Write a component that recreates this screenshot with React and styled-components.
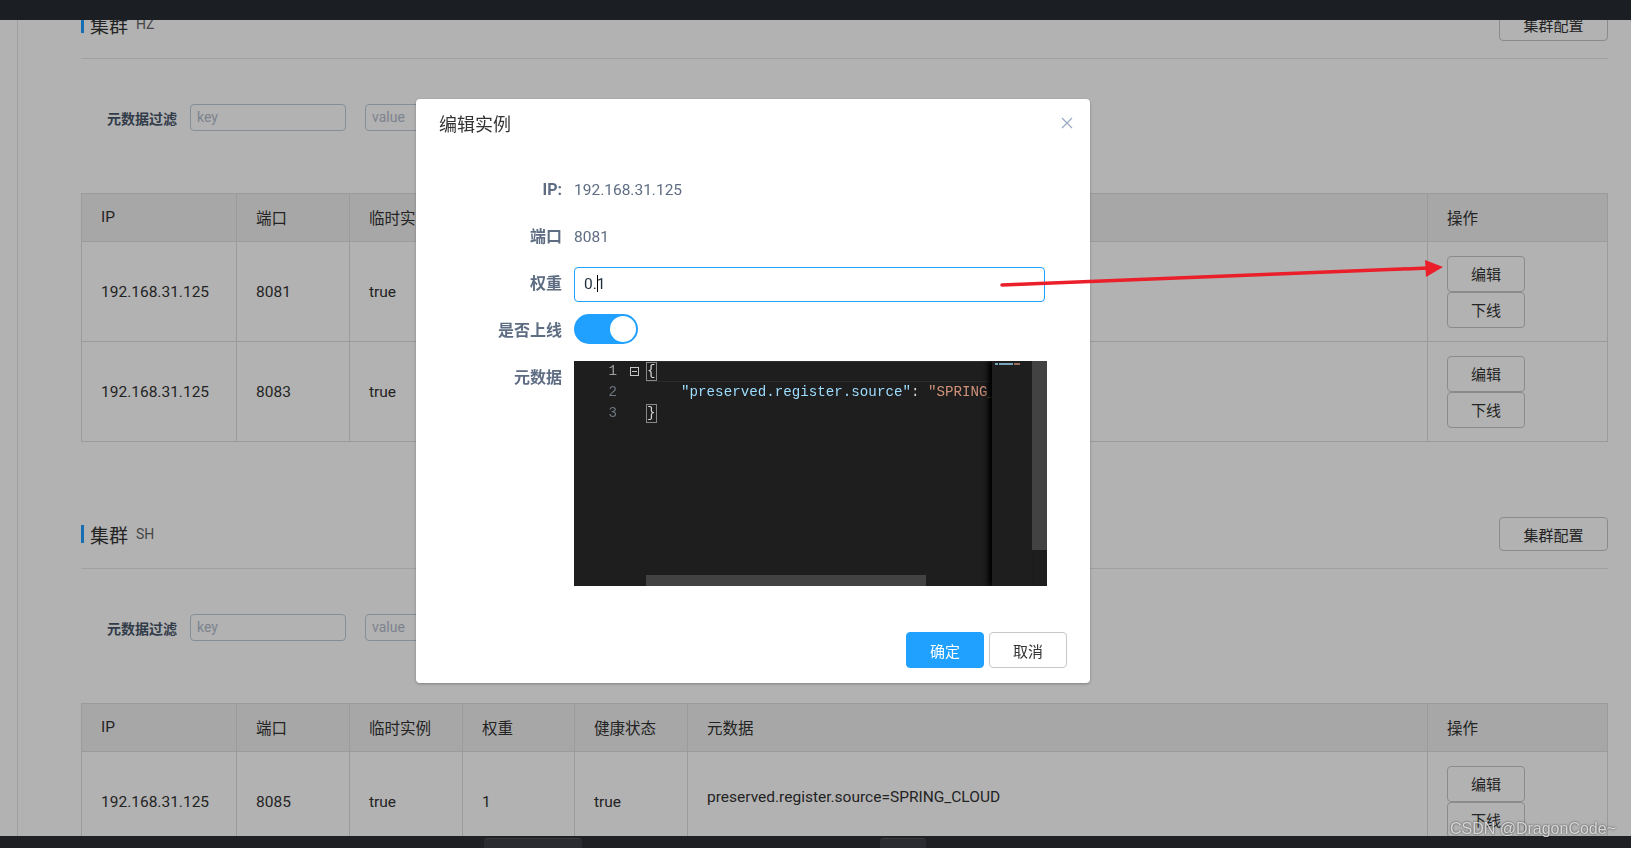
import styled, { createGlobalStyle } from 'styled-components';

const GlobalStyle = createGlobalStyle`
  html, body {
    margin: 0;
    padding: 0;
  }
  body {
    width: 1631px;
    height: 848px;
    overflow: hidden;
    background: #fff;
    font-family: Roboto, "Noto Sans CJK SC", sans-serif;
    color: #333;
  }
  * {
    box-sizing: border-box;
  }
`;

const Page = styled.div`
  width: 1631px;
  height: 848px;
  display: flex;
  flex-direction: column;
`;

const TopBar = styled.div`
  position: relative;
  z-index: 20;
  height: 20px;
  flex-shrink: 0;
  background: #1b1e23;
`;

const Main = styled.div`
  flex: 1;
  display: flex;
  overflow: hidden;
`;

const Sidebar = styled.div`
  width: 18px;
  flex-shrink: 0;
  border-right: 1px solid #e4e4e4;
`;

const Content = styled.div`
  flex: 1;
  margin-top: -13px;
  padding: 0 24px 0 63px;
`;

const Section = styled.section`
  margin-bottom: 75px;
`;

const SectionHead = styled.div`
  display: flex;
  align-items: center;
  justify-content: space-between;
  padding-bottom: 17px;
  border-bottom: 1px solid #e6e6e6;
`;

const Title = styled.h3`
  margin: 0;
  display: flex;
  align-items: center;
  border-left: 3px solid #20a0ff;
  padding-left: 6px;
  height: 18px;
  font-size: 19px;
  font-weight: normal;
  color: #333;
`;

const TitleTag = styled.span`
  margin-left: 8px;
  font-size: 14px;
  color: #666;
`;

const PlainButton = styled.button`
  width: ${(p) => p.$w || 78}px;
  height: ${(p) => p.$h || 36}px;
  padding: 0;
  border: 1px solid #c8c8c8;
  border-radius: 4px;
  background: #fff;
  font-family: inherit;
  font-size: 15px;
  color: #333;
  display: block;
`;

const FilterRow = styled.div`
  display: flex;
  align-items: center;
  height: 27px;
  margin-top: 45px;
  padding-left: 26px;
  gap: 19px;
`;

const FilterLabel = styled.label`
  font-size: 14px;
  font-weight: bold;
  color: #48576a;
  margin-right: -6px;
`;

const FilterInput = styled.div`
  width: 156px;
  height: 27px;
  border: 1px solid #bfcbd9;
  border-radius: 4px;
  padding-left: 6px;
  font-size: 14px;
  line-height: 25px;
  color: #b4bccc;
`;

const Table = styled.table`
  margin-top: 62px;
  width: 100%;
  border-collapse: collapse;
  table-layout: fixed;
  font-size: 15.5px;
`;

const Th = styled.th`
  height: 48px;
  padding: 0 19px 2px;
  text-align: left;
  font-weight: normal;
  color: #333;
  background: #f0f0f0;
  border: 1px solid #dfdfdf;
`;

const Td = styled.td`
  height: 100px;
  padding: 0 19px ${(p) => (p.$raise ? 9 : 0)}px;
  color: #333;
  border: 1px solid #dfdfdf;
  white-space: nowrap;
`;

const Overlay = styled.div`
  position: fixed;
  inset: 0;
  z-index: 10;
  background: rgba(0, 0, 0, 0.3);
`;

const BottomBar = styled.div`
  position: relative;
  z-index: 20;
  height: 12px;
  flex-shrink: 0;
  background: #1f2024;
  display: flex;
  align-items: flex-end;
  padding-left: 484px;
  gap: 298px;
`;

const BarTab = styled.div`
  width: ${(p) => p.$w}px;
  height: 10px;
  border-radius: 4px 4px 0 0;
  background: #2a2b30;
  border-top: 1px solid #3c3d42;
`;

const Dialog = styled.div`
  position: fixed;
  left: 416px;
  top: 99px;
  z-index: 30;
  width: 674px;
  background: #fff;
  border-radius: 4px;
  box-shadow: 0 1px 3px rgba(0, 0, 0, 0.3);
`;

const DialogHead = styled.div`
  height: 48px;
  display: flex;
  align-items: center;
  justify-content: space-between;
  padding: 0 17px 0 23px;
`;

const DialogTitle = styled.span`
  font-size: 18px;
  color: #333;
`;

const DialogBody = styled.div`
  padding: 26px 45px 30px 23px;
`;

const FormItem = styled.div`
  display: flex;
  align-items: flex-start;
  min-height: 36px;
  margin-bottom: ${(p) => (p.$last ? 0 : 11)}px;
`;

const FormLabel = styled.div`
  width: 135px;
  flex-shrink: 0;
  padding-right: 12px;
  text-align: right;
  line-height: 34px;
  font-size: 16px;
  font-weight: bold;
  color: #5e6d82;
`;

const FormValue = styled.div`
  flex: 1;
  line-height: 34px;
  font-size: 15.5px;
  color: #5e6d82;
`;

const TextInput = styled.div`
  height: 35px;
  border: 1px solid #20a0ff;
  border-radius: 4px;
  padding-left: 9px;
  line-height: 33px;
  font-size: 15.5px;
  color: #1f2d3d;
`;

const Caret = styled.span`
  display: inline-block;
  width: 1px;
  height: 17px;
  margin: 0 -1px 0 0;
  vertical-align: -3px;
  background: #000;
`;

const Switch = styled.div`
  width: 64px;
  height: 30px;
  border-radius: 15px;
  background: #20a0ff;
  display: flex;
  align-items: center;
  justify-content: flex-end;
  padding-right: 2px;
`;

const Knob = styled.div`
  width: 26px;
  height: 26px;
  border-radius: 50%;
  background: #fff;
`;

const Editor = styled.div`
  position: relative;
  height: 225px;
  background: #1e1e1e;
  display: flex;
  overflow: hidden;
  font-family: "Liberation Mono", "DejaVu Sans Mono", monospace;
  font-size: 14.2px;
  line-height: 21px;
`;

const Gutter = styled.div`
  width: 72px;
  flex-shrink: 0;
`;

const GutterLine = styled.div`
  display: flex;
  height: 21px;
`;

const LineNo = styled.span`
  width: 43px;
  text-align: right;
  color: ${(p) => (p.$active ? '#a0a0a0' : '#6e7681')};
`;

const Fold = styled.span`
  flex: 1;
  display: flex;
  align-items: center;
  padding-left: 13px;
`;

const FoldBox = styled.span`
  width: 9px;
  height: 9px;
  border: 1px solid #c5c5c5;
  display: flex;
  align-items: center;
  justify-content: center;
  &::after {
    content: '';
    width: 5px;
    height: 1px;
    background: #c5c5c5;
  }
`;

const Code = styled.div`
  flex: 1;
  white-space: pre;
  color: #d4d4d4;
`;

const CodeLine = styled.div`
  height: 21px;
  padding-left: 1px;
  border-top: ${(p) => (p.$active ? '1px solid #2c2c2c' : 'none')};
  border-bottom: ${(p) => (p.$active ? '1px solid #2c2c2c' : 'none')};
  line-height: ${(p) => (p.$active ? 19 : 21)}px;
`;

const Bracket = styled.span`
  display: inline-block;
  line-height: 17px;
  border: 1px solid #888;
  margin: 0 -1px;
`;

const Key = styled.span`
  color: #9cdcfe;
`;

const Str = styled.span`
  color: #ce9178;
`;

const Minimap = styled.div`
  position: absolute;
  top: 0;
  right: 15px;
  width: 40px;
  height: 100%;
  background: #1e1e1e;
  box-shadow: -4px 0 5px #000;
  padding: 2px 0 0 3px;
  display: flex;
  gap: 1px;
  align-items: flex-start;
`;

const MiniMark = styled.span`
  width: ${(p) => p.$w}px;
  height: 2px;
  background: ${(p) => p.$c};
  opacity: 0.7;
`;

const VScroll = styled.div`
  position: absolute;
  top: 0;
  right: 0;
  width: 15px;
  height: 189px;
  background: #424242;
`;

const HScroll = styled.div`
  position: absolute;
  left: 72px;
  bottom: 0;
  width: 280px;
  height: 11px;
  background: #424242;
`;

const DialogFoot = styled.div`
  display: flex;
  justify-content: flex-end;
  gap: 5px;
  padding: 16px 23px 15px;
`;

const PrimaryButton = styled.button`
  width: 78px;
  height: 36px;
  padding: 0;
  border: 1px solid #20a0ff;
  border-radius: 4px;
  background: #20a0ff;
  font-family: inherit;
  font-size: 15px;
  color: #fff;
`;

const ArrowLayer = styled.svg`
  position: fixed;
  inset: 0;
  z-index: 40;
  pointer-events: none;
`;

const Watermark = styled.div`
  position: fixed;
  right: 15px;
  bottom: 10px;
  z-index: 50;
  font-family: "Liberation Sans", Arial, sans-serif;
  font-size: 16px;
  color: rgba(255, 255, 255, 0.75);
  text-shadow: 0 0 2px rgba(0, 0, 0, 0.8);
`;

const columns = ['IP', '端口', '临时实例', '权重', '健康状态', '元数据', '操作'];
const widths = [155, 113, 113, 112, 113, 740, 180];

const clusters = [
  { name: 'HZ', ports: ['8081', '8083'] },
  { name: 'SH', ports: ['8085'] },
];

function Cluster({ name, ports }) {
  return (
    <Section>
      <SectionHead>
        <Title>
          集群<TitleTag>{name}</TitleTag>
        </Title>
        <PlainButton $w={109} $h={34}>集群配置</PlainButton>
      </SectionHead>
      <FilterRow>
        <FilterLabel>元数据过滤</FilterLabel>
        <FilterInput>key</FilterInput>
        <FilterInput>value</FilterInput>
      </FilterRow>
      <Table>
        <colgroup>
          {widths.map((w, i) => (
            <col key={i} style={{ width: w }} />
          ))}
        </colgroup>
        <thead>
          <tr>
            {columns.map((c) => (
              <Th key={c}>{c}</Th>
            ))}
          </tr>
        </thead>
        <tbody>
          {ports.map((port) => (
            <tr key={port}>
              <Td>192.168.31.125</Td>
              <Td>{port}</Td>
              <Td>true</Td>
              <Td>1</Td>
              <Td>true</Td>
              <Td $raise>preserved.register.source=SPRING_CLOUD</Td>
              <Td>
                <PlainButton>编辑</PlainButton>
                <PlainButton>下线</PlainButton>
              </Td>
            </tr>
          ))}
        </tbody>
      </Table>
    </Section>
  );
}

export default function App() {
  return (
    <>
      <GlobalStyle />
      <Page>
        <TopBar />
        <Main>
          <Sidebar />
          <Content>
            {clusters.map((c) => (
              <Cluster key={c.name} {...c} />
            ))}
          </Content>
        </Main>
        <BottomBar>
          <BarTab $w={98} />
          <BarTab $w={46} />
        </BottomBar>
      </Page>

      <Overlay />

      <Dialog>
        <DialogHead>
          <DialogTitle>编辑实例</DialogTitle>
          <svg width="12" height="12" viewBox="0 0 12 12">
            <path d="M1 1L11 11M11 1L1 11" stroke="#99a9bf" strokeWidth="1.2" />
          </svg>
        </DialogHead>
        <DialogBody>
          <FormItem>
            <FormLabel>IP:</FormLabel>
            <FormValue>192.168.31.125</FormValue>
          </FormItem>
          <FormItem>
            <FormLabel>端口</FormLabel>
            <FormValue>8081</FormValue>
          </FormItem>
          <FormItem>
            <FormLabel>权重</FormLabel>
            <FormValue>
              <TextInput>
                0.<Caret />1
              </TextInput>
            </FormValue>
          </FormItem>
          <FormItem>
            <FormLabel>是否上线</FormLabel>
            <FormValue>
              <Switch>
                <Knob />
              </Switch>
            </FormValue>
          </FormItem>
          <FormItem $last>
            <FormLabel>元数据</FormLabel>
            <FormValue>
              <Editor>
                <Gutter>
                  <GutterLine>
                    <LineNo $active>1</LineNo>
                    <Fold>
                      <FoldBox />
                    </Fold>
                  </GutterLine>
                  <GutterLine>
                    <LineNo>2</LineNo>
                  </GutterLine>
                  <GutterLine>
                    <LineNo>3</LineNo>
                  </GutterLine>
                </Gutter>
                <Code>
                  <CodeLine $active>
                    <Bracket>{'{'}</Bracket>
                  </CodeLine>
                  <CodeLine>
                    {'    '}
                    <Key>"preserved.register.source"</Key>: <Str>"SPRING_CLOUD"</Str>
                  </CodeLine>
                  <CodeLine>
                    <Bracket>{'}'}</Bracket>
                  </CodeLine>
                </Code>
                <Minimap>
                  <MiniMark $w={3} $c="#9cdcfe" />
                  <MiniMark $w={14} $c="#9cdcfe" />
                  <MiniMark $w={6} $c="#ce9178" />
                </Minimap>
                <VScroll />
                <HScroll />
              </Editor>
            </FormValue>
          </FormItem>
        </DialogBody>
        <DialogFoot>
          <PrimaryButton>确定</PrimaryButton>
          <PlainButton>取消</PlainButton>
        </DialogFoot>
      </Dialog>

      <ArrowLayer width="1631" height="848" viewBox="0 0 1631 848">
        <line x1="1002" y1="285" x2="1428" y2="268" stroke="#ea1f2a" strokeWidth="3.5" strokeLinecap="round" />
        <polygon points="1443,267 1425,260 1426,277" fill="#ea1f2a" />
      </ArrowLayer>

      <Watermark>CSDN @DragonCode~</Watermark>
    </>
  );
}
